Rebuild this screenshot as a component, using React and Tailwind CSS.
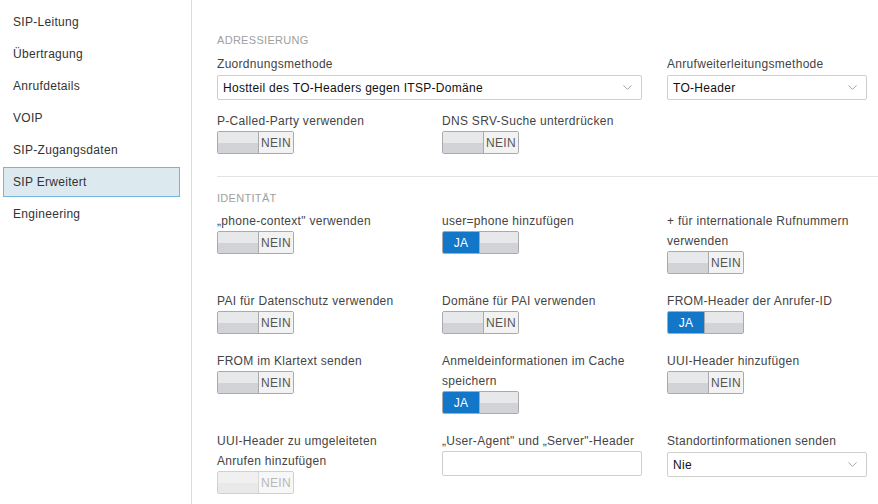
import { ChevronDown } from 'lucide-react';

const navItems = ['SIP-Leitung', 'Übertragung', 'Anrufdetails', 'VOIP', 'SIP-Zugangsdaten', 'SIP Erweitert', 'Engineering'];

function Toggle({ on, disabled }) {
    const knob = (
        <div className="w-[40px] h-full flex flex-col">
            <div className={`flex-1 ${disabled ? 'bg-[#f0f0f0]' : 'bg-[#e7e8ea]'}`}></div>
            <div className={`flex-1 ${disabled ? 'bg-[#e9e9e9]' : 'bg-[#d2d3d6]'}`}></div>
        </div>
    );
    return (
        <div className={`w-[77px] h-[23px] flex rounded-[2px] border overflow-hidden
                        ${disabled ? 'border-[#d0d0d0]' : 'border-[#a9aaad]'}`}>
            {on ? (
                <>
                    <div className="w-[38px] h-full bg-[#1277c9] text-white flex items-center
                                    justify-center text-[12px]">JA</div>
                    <div className="border-l border-[#a9aaad]"></div>
                    {knob}
                </>
            ) : (
                <>
                    {knob}
                    <div className={`border-l ${disabled ? 'border-[#d8d8d8]' : 'border-[#a9aaad]'}`}></div>
                    <div className={`flex-1 h-full flex items-center justify-center text-[12px]
                                    ${disabled ? 'bg-[#f7f7f7] text-[#b8b8b8]' : 'bg-[#f2f2f2] text-[#555]'}`}>
                        NEIN
                    </div>
                </>
            )}
        </div>
    );
}

function Select({ value, width }) {
    return (
        <div className={`mt-[1px] ${width} h-[25px] border border-[#cfcfcf] rounded-[2px] bg-white
                        flex items-center justify-between pl-[5px] pr-[6px]`}>
            <span className="text-[12px] text-[#111]">{value}</span>
            <ChevronDown size={15} strokeWidth={1.2} className="text-[#888]" />
        </div>
    );
}

function Field({ label, children }) {
    return (
        <div>
            <p className="pt-[2px] text-[12px] leading-[20px] text-[#444]">{label}</p>
            {children}
        </div>
    );
}

function SectionTitle({ children }) {
    return (
        <p className="text-[11px] leading-[14px] text-[#a0a0a0] uppercase">{children}</p>
    );
}

export default function App() {
    return (
        <div className="w-[878px] h-[504px] bg-white flex overflow-hidden tracking-[0.3px]"
             style={{ fontFamily: '"Liberation Sans", Arial, sans-serif' }}>
            <div className="w-[192px] shrink-0 border-r border-[#dcdcdc] pt-[6px]">
                {navItems.map((item) => (
                    <div key={item} className="h-[32px] flex items-center">
                        <div className={`ml-[3px] w-[177px] h-[30px] flex items-center pl-[9px]
                                        text-[12px] text-[#333]
                                        ${item === 'SIP Erweitert'
                                            ? 'bg-[#dce9ef] border border-[#72b6de]'
                                            : 'border border-transparent'}`}>
                            {item}
                        </div>
                    </div>
                ))}
            </div>

            <div className="flex-1 pl-[25px] pt-[33px]">
                <SectionTitle>Adressierung</SectionTitle>
                <div className="grid grid-cols-[225px_225px_225px] mt-[5px]">
                    <div className="col-span-2">
                        <Field label="Zuordnungsmethode">
                            <Select value="Hostteil des TO-Headers gegen ITSP-Domäne" width="w-[425px]" />
                        </Field>
                    </div>
                    <Field label="Anrufweiterleitungsmethode">
                        <Select value="TO-Header" width="w-[200px]" />
                    </Field>
                </div>
                <div className="grid grid-cols-[225px_225px_225px] mt-[9px]">
                    <Field label="P-Called-Party verwenden"><Toggle /></Field>
                    <Field label="DNS SRV-Suche unterdrücken"><Toggle /></Field>
                </div>

                <div className="border-t border-[#e3e3e3] mt-[22px] mb-[14px]"></div>

                <SectionTitle>Identität</SectionTitle>
                <div className="grid grid-cols-[225px_225px_225px] gap-y-[15px] mt-[4px]">
                    <Field label={'„phone-context" verwenden'}><Toggle /></Field>
                    <Field label="user=phone hinzufügen"><Toggle on /></Field>
                    <Field label={<>+ für internationale Rufnummern<br />verwenden</>}><Toggle /></Field>

                    <Field label="PAI für Datenschutz verwenden"><Toggle /></Field>
                    <Field label="Domäne für PAI verwenden"><Toggle /></Field>
                    <Field label="FROM-Header der Anrufer-ID"><Toggle on /></Field>

                    <Field label="FROM im Klartext senden"><Toggle /></Field>
                    <Field label={<>Anmeldeinformationen im Cache<br />speichern</>}><Toggle on /></Field>
                    <Field label="UUI-Header hinzufügen"><Toggle /></Field>

                    <Field label={<>UUI-Header zu umgeleiteten<br />Anrufen hinzufügen</>}><Toggle disabled /></Field>
                    <Field label={'„User-Agent" und „Server"-Header'}>
                        <div className="w-[200px] h-[25px] border border-[#cfcfcf] rounded-[2px] bg-white"></div>
                    </Field>
                    <Field label="Standortinformationen senden">
                        <Select value="Nie" width="w-[200px]" />
                    </Field>
                </div>
            </div>
        </div>
    );
}
